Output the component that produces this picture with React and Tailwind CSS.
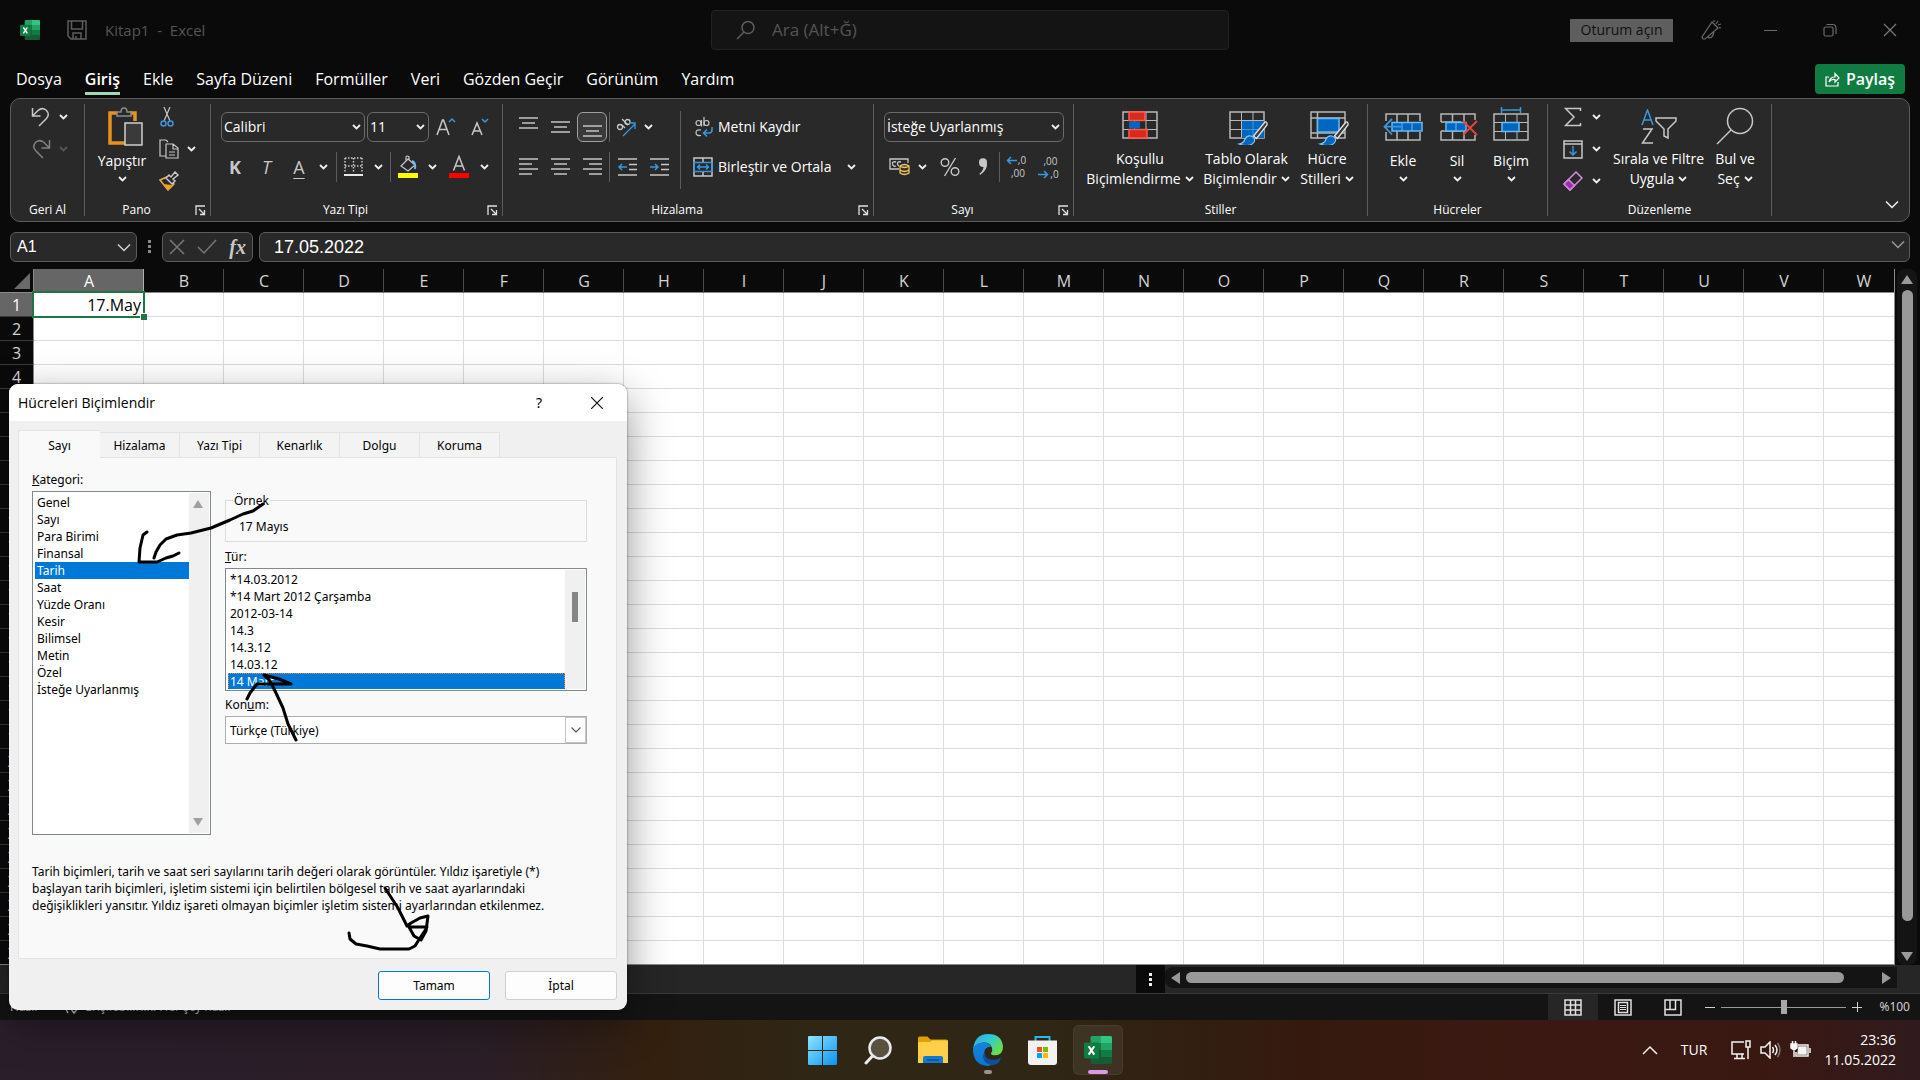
import { useState } from "react";
import clsx from "clsx";

const COLUMNS = "ABCDEFGHIJKLMNOPQRSTUVW".split("");
const ROWS = Array.from({ length: 28 }, (_, i) => i + 1);

const MENU = ["Dosya", "Giriş", "Ekle", "Sayfa Düzeni", "Formüller", "Veri", "Gözden Geçir", "Görünüm", "Yardım"];

const CATEGORIES = [
  "Genel", "Sayı", "Para Birimi", "Finansal", "Tarih", "Saat", "Yüzde Oranı",
  "Kesir", "Bilimsel", "Metin", "Özel", "İsteğe Uyarlanmış",
];

const TYPES = ["*14.03.2012", "*14 Mart 2012 Çarşamba", "2012-03-14", "14.3", "14.3.12", "14.03.12", "14 Mart"];

const DIALOG_TABS = ["Sayı", "Hizalama", "Yazı Tipi", "Kenarlık", "Dolgu", "Koruma"];

/* ---------- icons ---------- */

const Svg = ({ w, h, className, children, ...rest }) => (
  <svg width={w} height={h} viewBox={`0 0 ${w} ${h}`} fill="none" stroke="#c8c8c8" strokeWidth="1.5" className={clsx("shrink-0", className)} aria-hidden="true" {...rest}>
    {children}
  </svg>
);

const Chevron = ({ color = "#f0f0f0", className }) => (
  <Svg w={9} h={6} stroke={color} strokeWidth="1.8" className={className}>
    <path d="M1 1l3.5 3.5L8 1" />
  </Svg>
);

const ChevronWide = ({ color = "#d0d0d0", className }) => (
  <Svg w={14} h={9} stroke={color} className={className}>
    <path d="M1 1.5l6 6 6-6" />
  </Svg>
);

const ExcelLogo = ({ size }) => (
  <svg width={size} height={size} viewBox="0 0 30 30" className="shrink-0" aria-hidden="true">
    <path d="M8.500 0h10v8h-11.500v-6.500q0-1.500 1.500-1.500z" fill="#21a366" />
    <path d="M18 0h10.500q1.500 0 1.500 1.500v6h-12z" fill="#33c481" />
    <path d="M7 7.500h11v7.500h-11z" fill="#107c41" />
    <path d="M18 7.500h12v7.500h-12z" fill="#21a366" />
    <path d="M7 15h11v15h-9.500q-1.500 0-1.500-1.500z" fill="#185c37" />
    <path d="M18 15h12v7.500h-12z" fill="#107c41" />
    <path d="M18 22.500h12v6q0 1.500-1.500 1.500h-10.500z" fill="#185c37" />
    <rect x="0" y="7" width="16" height="17" rx="1.500" fill="#107c41" />
    <path d="M5 11l6 9M11 11l-6 9" stroke="#fff" strokeWidth="2.200" />
  </svg>
);

const Lines = ({ rows }) => (
  <Svg w={19} h={rows.length * 5} stroke="#c4c4c4">
    {rows.map(([x, len], i) => (
      <path key={i} d={`M${x} ${2 + i * 5}h${len}`} />
    ))}
  </Svg>
);

const GridBase = () => (
  <g stroke="#b8b8b8" strokeWidth="1.500">
    <path d="M1 1h34v26H1z" />
    <path d="M1 9.500h34M1 18.500h34M12.500 1v26M24 1v26" strokeWidth="1" />
  </g>
);

const Brush = () => (
  <g>
    <path d="M36 11l-11.500 14 3 2.500L38 14q.5-3.500-2-3z" fill="#3b3b3b" stroke="#e0e0e0" strokeWidth="1.300" />
    <path d="M10 33q5-1 6-5 2-4 6-3 5 2 3 6-4 6-15 2z" fill="#0067c0" stroke="#8cc4f0" strokeWidth="1.200" />
  </g>
);

const Launcher = () => (
  <Svg w={11} h={11} stroke="#e0e0e0" strokeWidth="1.300">
    <path d="M1 10V1h9M4 4l5 5M9.500 5v4.500H5" />
  </Svg>
);

/* ---------- ribbon pieces ---------- */

const Group = ({ label, className, inner, launcher, children }) => (
  <>
    <section aria-label={label} className={clsx("flex shrink-0 flex-col", className)}>
      <div className={clsx("flex flex-1", inner)}>{children}</div>
      <div className="mb-[3px] flex h-4 items-center text-xs leading-4">
        <span className="flex-1 text-center">{label}</span>
        {launcher && (
          <button type="button" aria-label={`${label} ayarları`} className="flex w-[22px] justify-end pr-1">
            <Launcher />
          </button>
        )}
      </div>
    </section>
    <span className="my-[5px] w-px shrink-0 bg-[#5c5c5c]" />
  </>
);

const Tool = ({ label, className, children }) => (
  <button type="button" aria-label={label} className={clsx("flex shrink-0 items-center justify-center", className)}>
    {children}
  </button>
);

const Drop = ({ className, color }) => (
  <Tool label="Diğer seçenekler" className={clsx("h-5", className)}>
    <Chevron color={color} />
  </Tool>
);

const Sep = ({ className }) => <span className={clsx("w-px shrink-0 bg-[#5c5c5c]", className)} />;

const Combo = ({ label, value, className }) => (
  <span className={clsx("relative flex shrink-0", className)}>
    <select aria-label={label} className="h-[30px] w-full appearance-none rounded-md border border-[#6a6a6a] bg-transparent px-[2px] text-sm text-white outline-none">
      <option>{value}</option>
    </select>
    <Chevron className="pointer-events-none absolute top-3 right-1" />
  </span>
);

const BigTool = ({ lines, below, className, children }) => (
  <button type="button" className={clsx("flex shrink-0 flex-col items-center text-sm leading-5", className)}>
    <span className={clsx("flex items-end justify-center pb-1", below ? "h-[52px]" : "h-[50px]")}>{children}</span>
    {lines.map((line, i) => (
      <span key={line} className="flex items-center gap-1 whitespace-nowrap">
        {line}
        {!below && i === lines.length - 1 && <Chevron />}
      </span>
    ))}
    {below && <Chevron className="mt-[5px]" />}
  </button>
);

const TitleBar = () => (
  <header className="flex h-[60px] shrink-0 items-center justify-between text-[#555]">
    <div className="flex flex-1 items-center pl-5">
      <ExcelLogo size={20} />
      <Tool label="Kaydet" className="ml-[27px]">
        <Svg w={20} h={20} stroke="#5e5e5e">
          <path d="M1 1h18v18H4l-3-3zM4.500 1v8h11V1M6 19v-6h8v6M9 16v3" />
        </Svg>
      </Tool>
      <span className="ml-[18px] text-[15px] whitespace-pre">Kitap1  -  Excel</span>
    </div>
    <label className="flex h-10 w-[518px] items-center gap-4 rounded border border-[#222] bg-[#141414] pl-6">
      <Svg w={20} h={20} stroke="#5e5e5e">
        <circle cx="12" cy="7.500" r="6" />
        <path d="M8 12l-7 7" />
      </Svg>
      <input aria-label="Ara" placeholder="Ara (Alt+Ğ)" className="flex-1 bg-transparent text-[17px] outline-none placeholder:text-[#555]" />
    </label>
    <div className="flex flex-1 items-center justify-end">
      <button type="button" className="h-[23px] w-[103px] bg-[#5e5e5e] text-sm text-[#111]">Oturum açın</button>
      <Tool label="Yenilikler" className="ml-7">
        <Svg w={22} h={22} stroke="#6a6a6a">
          <path d="M2 20l-1-2L11 3l6 6L4 20zM7 18q4 3 6-5M13 1v2M17 2l-2 3M20 5l-3 1M20 9l-2-.5" strokeWidth="1.200" />
        </Svg>
      </Tool>
      <Tool label="Simge durumuna küçült" className="ml-[17px] w-[60px]">
        <Svg w={13} h={13} stroke="#6a6a6a"><path d="M0 6.500h13" strokeWidth="1" /></Svg>
      </Tool>
      <Tool label="Geri yükle" className="w-[60px]">
        <Svg w={14} h={14} stroke="#6a6a6a" strokeWidth="1.200">
          <rect x="1" y="4" width="9" height="9" rx="1.500" />
          <path d="M3.500 1.500h6q3.500 0 3.500 3.500v6" />
        </Svg>
      </Tool>
      <Tool label="Kapat" className="w-[60px]">
        <Svg w={14} h={14} stroke="#7a7a7a" strokeWidth="1.200"><path d="M1 1l12 12M13 1L1 13" /></Svg>
      </Tool>
    </div>
  </header>
);

const MenuBar = () => (
  <nav className="flex h-[38px] shrink-0 items-center pr-[15px] pl-4">
    <ul className="flex gap-[23px] text-base">
      {MENU.map((item) => (
        <li key={item}>
          <button type="button" className={clsx("flex h-8 items-center border-b-[3px] pt-[2px] whitespace-nowrap", item === "Giriş" ? "border-[#9fd9b8] font-semibold" : "border-transparent")}>
            {item}
          </button>
        </li>
      ))}
    </ul>
    <button type="button" className="ml-auto flex h-[30px] w-[90px] items-center justify-center gap-1.5 rounded bg-[#107c41] text-base font-semibold">
      <Svg w={15} h={15} stroke="#fff" strokeWidth="1.200">
        <path d="M4 5H1v9h12v-4M4 10q1-5 6-5V1.500L14 6l-4 4V7.500Q6 7 4 10z" />
      </Svg>
      Paylaş
    </button>
  </nav>
);

const Ribbon = () => (
  <div className="mx-[10px] flex h-[124px] shrink-0 rounded-[10px] border border-[#5c5c5c] bg-[#292929]">
    <Group label="Geri Al" className="w-[73px]">
      <div className="flex flex-col gap-3 pt-2 pl-5">
        <div className="flex items-center gap-1">
          <Tool label="Geri al">
            <Svg w={20} h={20}><path d="M1.500 1v8h8M1.500 9L7 3.500q4-3.500 8-.5 4.500 4.500 0 9L8 19" /></Svg>
          </Tool>
          <Drop className="w-4" />
        </div>
        <div className="flex items-center gap-1">
          <Tool label="Yinele">
            <Svg w={20} h={20} stroke="#808080"><path d="M18.500 1v8h-8M18.500 9L13 3.500q-4-3.500-8-.5-4.500 4.500 0 9L12 19" /></Svg>
          </Tool>
          <Drop className="w-4" color="#555" />
        </div>
      </div>
    </Group>

    <Group label="Pano" className="w-[125px]" launcher>
      <BigTool lines={["Yapıştır"]} below className="w-[74px]">
        <Svg w={36} h={40} className="ml-2">
          <path d="M9 6H2v30h15M27 14V6h-6" stroke="#e8921c" strokeWidth="3.500" />
          <path d="M9 9V5h4q0-4 3-4t3 4h4v4z" fill="#292929" stroke="#8c8c8c" />
          <rect x="17" y="16" width="17" height="22" fill="#3a3a3a" stroke="#d0d0d0" />
        </Svg>
      </BigTool>
      <div className="flex flex-col gap-3 pt-2">
        <Tool label="Kes" className="h-5 w-4">
          <Svg w={14} h={20}>
            <path d="M4 0l6 14M10 0L4 14" strokeWidth="1.200" />
            <circle cx="3.500" cy="16.500" r="2.500" stroke="#3a96dd" />
            <circle cx="10.500" cy="16.500" r="2.500" stroke="#3a96dd" />
          </Svg>
        </Tool>
        <div className="flex">
          <Tool label="Kopyala" className="h-5 w-5">
            <Svg w={20} h={20}>
              <path d="M7 17H1V1h6l2 2M7 5h7l5 4v10H7zM14 5v5h5M10 13h6M10 16h6" strokeWidth="1.200" />
            </Svg>
          </Tool>
          <Drop className="ml-1 w-4" />
        </div>
        <Tool label="Biçim boyacısı" className="h-5 w-5">
          <Svg w={20} h={20}>
            <path d="M1 9l7-3 7 7-6 6z" fill="#292929" stroke="#e8b04c" />
            <path d="M4 13l9 1-4 5z" fill="#f0a020" stroke="none" />
            <path d="M7 7l3-3 2 2 4-5 3 3-5 4 2 2-3 3z" fill="#292929" />
          </Svg>
        </Tool>
      </div>
    </Group>

    <Group label="Yazı Tipi" className="w-[291px]" launcher>
      <div className="flex flex-col gap-[10px] pt-[13px] pl-[10px]">
        <div className="flex h-[30px] items-center">
          <Combo label="Yazı tipi" value="Calibri" className="w-[144px]" />
          <Combo label="Yazı tipi boyutu" value="11" className="ml-[2px] w-[62px]" />
          <Tool label="Büyüt" className="w-[34px]">
            <Svg w={20} h={20}><path d="M1 18L6.500 3h1L13 18M3 12.500h8" /><path d="M13 5l3-3 3 3" stroke="#3a96dd" /></Svg>
          </Tool>
          <Tool label="Küçült" className="w-[34px]">
            <Svg w={20} h={20}><path d="M2 18L7 6l5 12M4 14h6" /><path d="M12 2l3 3 3-3" stroke="#3a96dd" /></Svg>
          </Tool>
        </div>
        <div className="flex h-[30px] items-center text-lg leading-5 text-[#c8c8c8]">
          <button type="button" className="w-7 font-bold">K</button>
          <button type="button" className="w-[35px] italic">T</button>
          <button type="button" className="w-[30px] underline underline-offset-4">A</button>
          <Drop className="w-[18px]" />
          <Sep className="ml-1 h-[30px]" />
          <Tool label="Kenarlıklar" className="w-[33px]">
            <Svg w={19} h={20}>
              <path d="M1 1h17M1 9h17M1 1v15M9.500 1v15M18 1v15" strokeDasharray="1.500 1.500" />
              <path d="M0 18h19" stroke="#e8e8e8" strokeWidth="2" />
            </Svg>
          </Tool>
          <Drop className="w-4" />
          <Sep className="ml-1 h-[30px]" />
          <Tool label="Dolgu rengi" className="w-[33px]">
            <Svg w={20} h={24}>
              <path d="M10 4l7 6-7 6-7-5zM8 6V2q1-2 3 0v4" strokeWidth="1.200" />
              <path d="M14 6q4 1 3 8" stroke="#6cb8f0" strokeWidth="2" />
              <path d="M0 18h20v5H0z" fill="#ff0" stroke="none" />
            </Svg>
          </Tool>
          <Drop className="w-4" />
          <Tool label="Yazı tipi rengi" className="w-[38px]">
            <Svg w={20} h={24}>
              <path d="M4.500 15.500L10 1.500l5.500 14M6.500 11h7" />
              <path d="M0 18h20v5H0z" fill="#f00" stroke="none" />
            </Svg>
          </Tool>
          <Drop className="w-3" />
        </div>
      </div>
    </Group>

    <Group label="Hizalama" className="w-[370px]" launcher>
      <div className="flex w-[177px] flex-col gap-[10px] pt-[13px] pl-[9px]">
        <div className="flex h-[30px] items-center">
          <Tool label="Üste hizala" className="w-8 pb-2"><Lines rows={[[0, 19], [3, 13], [0, 19]]} /></Tool>
          <Tool label="Ortaya hizala" className="w-8"><Lines rows={[[0, 19], [3, 13], [0, 19]]} /></Tool>
          <Tool label="Alta hizala" className="mx-px h-[30px] w-[30px] rounded-md border border-[#a0a0a0] bg-[#3a3a3a] pt-2">
            <Lines rows={[[0, 19], [3, 13], [0, 19]]} />
          </Tool>
          <Sep className="ml-px h-[30px]" />
          <Tool label="Yönlendirme" className="w-8">
            <Svg w={20} h={20} strokeWidth="1.300">
              <circle cx="4" cy="10" r="2.500" />
              <path d="M6 8l3 3" />
              <path d="M6 2l6 6" />
              <circle cx="11.500" cy="5" r="2.500" />
              <path d="M7 19L19 7M13 6h6v6" stroke="#3a96dd" />
            </Svg>
          </Tool>
          <Drop className="w-3" />
        </div>
        <div className="flex h-[30px] items-center">
          <Tool label="Sola hizala" className="w-8"><Lines rows={[[0, 19], [0, 13], [0, 19], [0, 13]]} /></Tool>
          <Tool label="Ortala" className="w-8"><Lines rows={[[0, 19], [3, 13], [0, 19], [3, 13]]} /></Tool>
          <Tool label="Sağa hizala" className="w-8"><Lines rows={[[0, 19], [6, 13], [0, 19], [6, 13]]} /></Tool>
          <Sep className="ml-px h-[30px]" />
          <Tool label="Girintiyi azalt" className="w-[34px]">
            <Svg w={19} h={18}><path d="M0 1h19M11 6.500h8M11 11.500h8M0 17h19" /><path d="M9 9H1M4 6L1 9l3 3" stroke="#3a96dd" /></Svg>
          </Tool>
          <Tool label="Girintiyi artır" className="w-[30px]">
            <Svg w={19} h={18}><path d="M0 1h19M11 6.500h8M11 11.500h8M0 17h19" /><path d="M0 9h8M5 6l3 3-3 3" stroke="#3a96dd" /></Svg>
          </Tool>
        </div>
      </div>
      <Sep className="mt-3 h-[78px]" />
      <div className="flex flex-col gap-[10px] pt-[13px] pl-[11px] text-sm">
        <button type="button" className="flex h-[30px] items-center gap-1">
          <Svg w={22} h={20} strokeWidth="1.200">
            <circle cx="6.500" cy="6" r="2.500" /><path d="M9.500 3v6.500M12 0v9" /><circle cx="14.500" cy="6" r="2.500" />
            <path d="M9 13q-5-1-5 3 0 3 5 2.500" />
            <path d="M20 10v3q0 3-3 3h-5M15 12.500L11.500 16l3.500 3.500" stroke="#3a96dd" strokeWidth="1.500" />
          </Svg>
          Metni Kaydır
        </button>
        <div className="flex h-[30px] items-center">
          <button type="button" className="flex items-center gap-1">
            <Svg w={22} h={20}>
              <path d="M2 1h18v18H2zM11 1v4M11 15v4" />
              <path d="M2 5.500h18v9H2zM5 10h12M8 7.500L5.500 10 8 12.500M14 7.500l2.500 2.500-2.500 2.500" stroke="#3a96dd" />
            </Svg>
            Birleştir ve Ortala
          </button>
          <Drop className="ml-3 w-4" />
        </div>
      </div>
    </Group>

    <Group label="Sayı" className="w-[199px]" launcher>
      <div className="flex flex-col gap-[10px] pt-[13px] pl-[10px]">
        <Combo label="Sayı biçimi" value="İsteğe Uyarlanmış" className="w-[180px]" />
        <div className="flex h-[30px] items-center text-[#c8c8c8]">
          <Tool label="Finansal sayı biçimi" className="w-[30px]">
            <Svg w={21} h={18}>
              <path d="M10 11H1V1h18v4M7 4Q3 3 3.500 6 4 9 7 8M12 4Q8 3 8.500 6 9 8 10 8" strokeWidth="1.300" />
              <path d="M11 8v7q4.500 3 9 0V8q-4.500-3-9 0q4.500 3 9 0M11 12q4.500 3 9 0" fill="#3a3020" stroke="#f0c860" strokeWidth="1.300" />
            </Svg>
          </Tool>
          <Drop className="w-4" />
          <Tool label="Yüzde" className="w-10">
            <Svg w={20} h={20} strokeWidth="1.400">
              <circle cx="5" cy="5.500" r="3.800" /><circle cx="15" cy="14.500" r="3.800" /><path d="M15.500 1L4.500 19" />
            </Svg>
          </Tool>
          <Tool label="Virgül" className="w-[25px]">
            <Svg w={10} h={18} stroke="none"><path d="M1 4.500a4 4 0 018-.5q1 8-7 13l-.5-1.500Q5 13 5.500 9 1 9 1 4.500z" fill="#c8c8c8" /></Svg>
          </Tool>
          <Sep className="ml-1 h-[30px]" />
          <Tool label="Ondalık artır" className="w-8 flex-col text-[10px] leading-[14px]">
            <span className="flex h-3 items-center gap-px">
              <Svg w={11} h={9} stroke="#3a96dd"><path d="M11 4.500H1.500M5 1L1.500 4.500 5 8" /></Svg>,0
            </span>
            <span className="pl-1">,00</span>
          </Tool>
          <Tool label="Ondalık azalt" className="w-[33px] flex-col text-[10px] leading-[14px]">
            <span className="pl-1">,00</span>
            <span className="flex h-3 items-center gap-px">
              <Svg w={11} h={9} stroke="#3a96dd"><path d="M0 4.500h9.500M6 1l3.500 3.500L6 8" /></Svg>,0
            </span>
          </Tool>
        </div>
      </div>
    </Group>

    <Group label="Stiller" className="w-[293px]" inner="pl-2">
      <BigTool lines={["Koşullu", "Biçimlendirme"]} className="w-[116px]">
        <Svg w={36} h={34}>
          <GridBase />
          <path d="M7 1h16v8.500H7zM7 18.500h18V27H7z" fill="#d92a1c" stroke="#ff5a4c" />
          <path d="M7 10.500h11v7H7z" fill="#0067c0" stroke="none" />
        </Svg>
      </BigTool>
      <BigTool lines={["Tablo Olarak", "Biçimlendir"]} className="w-[97px]">
        <Svg w={39} h={34} className="ml-1">
          <GridBase />
          <path d="M13 10h22v17H13z" fill="#0067c0" stroke="none" />
          <path d="M13 18.500h22M24 10v17" stroke="#3a96dd" strokeWidth="1" />
          <Brush />
        </Svg>
      </BigTool>
      <BigTool lines={["Hücre", "Stilleri"]} className="w-16">
        <Svg w={39} h={34} className="ml-1">
          <path d="M1 1h34v26H1zM7.500 1v26M1 7h34M1 22h34" stroke="#b8b8b8" />
          <path d="M7.500 7.500H29V21H7.500z" fill="#0067c0" stroke="#6cb8f0" />
          <Brush />
        </Svg>
      </BigTool>
    </Group>

    <Group label="Hücreler" className="w-[179px]" inner="pl-2">
      <BigTool lines={["Ekle"]} below className="w-[54px]">
        <Svg w={40} h={34}>
          <g stroke="#b8b8b8"><path d="M3 8V1h34v7M3 19v8h34v-8M14 1v8M25 1v8M14 18v9M25 18v9" /></g>
          <path d="M9 9.500h30v8.500H9z" fill="#0067c0" stroke="#6cb8f0" />
          <path d="M19 9.500V18M29 9.500V18" stroke="#6cb8f0" strokeWidth="1" />
          <path d="M18 13.700H2M9 6l-7.500 7.700L9 21.500" stroke="#3a96dd" strokeWidth="1.800" />
        </Svg>
      </BigTool>
      <BigTool lines={["Sil"]} below className="w-[54px]">
        <Svg w={38} h={34} className="ml-1">
          <g stroke="#b8b8b8"><path d="M1 9V1h34v6M1 18v9h34v-5M12.500 1v8M24 1v8M12.500 18v9M24 18v9M1 9h20M1 18h20" /></g>
          <path d="M6 9.500h20v8.500H6z" fill="#0067c0" stroke="#6cb8f0" />
          <path d="M16 9.500V18" stroke="#6cb8f0" strokeWidth="1" />
          <path d="M23 8l14 14M37 8L23 22" stroke="#e8453a" strokeWidth="1.800" />
        </Svg>
      </BigTool>
      <BigTool lines={["Biçim"]} below className="w-[54px]">
        <Svg w={36} h={40}>
          <path d="M8 3h20M8.500 0v6M27.500 0v6" stroke="#3a96dd" />
          <g transform="translate(0 6)">
            <GridBase />
            <path d="M9 9.500h17v9H9z" fill="#0067c0" stroke="#6cb8f0" />
          </g>
        </Svg>
      </BigTool>
    </Group>

    <Group label="Düzenleme" className="w-[223px]">
      <div className="flex flex-col gap-3 pt-2 pl-3">
        <div className="flex">
          <Tool label="Otomatik toplam" className="h-5 w-[26px]">
            <Svg w={18} h={20}><path d="M16.500 4V1.500h-15L10 10l-8.500 8.500h15V16" /></Svg>
          </Tool>
          <Drop className="w-5" />
        </div>
        <div className="flex">
          <Tool label="Dolgu" className="h-5 w-[26px]">
            <Svg w={20} h={19}><path d="M1 1h18v17H1zM1 4h18" /><path d="M10 6v9M6.500 11.500L10 15l3.500-3.500" stroke="#3a96dd" /></Svg>
          </Tool>
          <Drop className="w-5" />
        </div>
        <div className="flex">
          <Tool label="Temizle" className="h-5 w-[26px]">
            <Svg w={20} h={20} stroke="#d58ae0">
              <path d="M1 13L13 1l6 6L7 19z" />
              <path d="M1 13l4.500-4.500 6 6L7 19z" fill="#9a2fa8" />
            </Svg>
          </Tool>
          <Drop className="w-5" />
        </div>
      </div>
      <BigTool lines={["Sırala ve Filtre", "Uygula"]} className="w-[105px]">
        <Svg w={38} h={36}>
          <path d="M2 16L7.500 1 13 16M4 11h7" stroke="#3a96dd" />
          <path d="M3 20h9L2.500 34H13" />
          <path d="M16 9h20v3l-8 8v9l-4-2v-7l-8-8z" />
        </Svg>
      </BigTool>
      <BigTool lines={["Bul ve", "Seç"]} className="w-12">
        <Svg w={38} h={38}><circle cx="24" cy="14" r="12.500" /><path d="M15 23L1 37" /></Svg>
      </BigTool>
    </Group>

    <div className="flex flex-1 items-end justify-end pr-[10px] pb-3">
      <Tool label="Şeridi daralt"><ChevronWide color="#f0f0f0" /></Tool>
    </div>
  </div>
);

const FormulaBar = () => (
  <div className="mx-[10px] mt-[10px] mb-[7px] flex h-[30px] shrink-0">
    <div className="relative w-[127px]">
      <input aria-label="Ad kutusu" defaultValue="A1" className="h-full w-full rounded-md border border-[#5c5c5c] bg-[#292929] px-1.5 font-['Liberation_Sans',sans-serif] text-base outline-none" />
      <ChevronWide className="pointer-events-none absolute top-[11px] right-1.5" />
    </div>
    <div className="flex w-[25px] items-center justify-center">
      <Svg w={3} h={14} stroke="none"><path d="M0 0h3v3H0zM0 5h3v3H0zM0 10h3v3H0z" fill="#8a8a8a" /></Svg>
    </div>
    <div className="flex w-[91px] items-center justify-around rounded-md border border-[#5c5c5c] bg-[#292929]">
      <Tool label="İptal et"><Svg w={16} h={16} stroke="#777"><path d="M1 1l14 14M15 1L1 15" /></Svg></Tool>
      <Tool label="Gir"><Svg w={20} h={16} stroke="#777"><path d="M1 8l6 6L19 1" /></Svg></Tool>
      <button type="button" className="font-['Liberation_Serif',serif] text-xl leading-6 font-bold text-[#c8c8c8] italic">fx</button>
    </div>
    <div className="relative ml-1.5 flex-1">
      <input aria-label="Formül çubuğu" defaultValue="17.05.2022" className="h-full w-full rounded-md border border-[#5c5c5c] bg-[#292929] px-3.5 font-['Liberation_Sans',sans-serif] text-lg outline-none" />
      <ChevronWide color="#999" className="pointer-events-none absolute top-2 right-[5px]" />
    </div>
  </div>
);

const Sheet = () => (
  <div className="flex min-h-0 flex-1">
    <div className="min-w-0 flex-1 overflow-hidden border-r border-b border-[#8a8a8a] bg-white">
      <table className="w-[1904px] table-fixed border-separate border-spacing-0 text-base leading-5">
        <thead>
          <tr className="h-6 bg-[#0a0a0a]">
            <th className="w-[34px] border-r border-b border-[#8a8a8a] p-0">
              <Svg w={16} h={16} stroke="none" className="ml-[14px]"><path d="M16 0v16H0z" fill="#6a6a6a" /></Svg>
            </th>
            {COLUMNS.map((col) => (
              <th
                key={col}
                className={clsx("border-r border-b border-b-[#8a8a8a] p-0 pt-px pl-px font-normal", col === "A" ? "w-[110px] border-r-[#b0b0b0] bg-[#666] text-white" : "w-20 border-r-[#4a4a4a] text-[#d4d4d4]")}
              >
                {col}
              </th>
            ))}
          </tr>
        </thead>
        <tbody>
          {ROWS.map((row) => (
            <tr key={row} className="h-6">
              <th className={clsx("border-r border-b border-r-[#8a8a8a] border-b-[#3a3a3a] p-0 pt-px font-normal", row === 1 ? "bg-[#666] text-white" : "bg-[#0a0a0a] text-[#d4d4d4]")}>
                {row}
              </th>
              {COLUMNS.map((col) =>
                row === 1 && col === "A" ? (
                  <td key={col} className="relative border-r border-b border-[#dcdcdc] p-0 pt-px pr-[2px] text-right text-black">
                    17.May
                    <span className="absolute -top-[2px] -right-[2px] -bottom-[2px] -left-[2px] border-2 border-[#217346]" />
                    <span className="absolute -right-1 -bottom-1 size-[7px] border-t border-l border-white bg-[#217346]" />
                  </td>
                ) : (
                  <td key={col} className="border-r border-b border-[#dcdcdc] p-0" />
                )
              )}
            </tr>
          ))}
        </tbody>
      </table>
    </div>
    <div className="mr-[3px] ml-[2px] flex w-5 flex-col items-center rounded-lg bg-[#141414] pt-1.5 pb-1">
      <Svg w={12} h={10} stroke="none"><path d="M6 0l6 9H0z" fill="#999" /></Svg>
      <span className="mt-[5px] mb-[30px] w-[11px] flex-1 rounded-full bg-[#999]" />
      <Svg w={12} h={10} stroke="none"><path d="M6 10l6-9H0z" fill="#999" /></Svg>
    </div>
  </div>
);

const SheetTabs = () => (
  <div className="flex h-[29px] shrink-0 border-b border-[#3a3a3a] bg-[#262626]">
    <div className="ml-auto flex w-[29px] items-center justify-center bg-[#0a0a0a]">
      <Svg w={3} h={13} stroke="none"><path d="M0 0h3v3H0zM0 5h3v3H0zM0 10h3v3H0z" fill="#f0f0f0" /></Svg>
    </div>
    <div className="mt-[2px] mr-[23px] flex h-[21px] w-[732px] items-center rounded-l-lg bg-[#141414] px-1.5">
      <Svg w={9} h={12} stroke="none"><path d="M0 6l9-6v12z" fill="#999" /></Svg>
      <span className="mr-[38px] ml-1.5 h-[11px] flex-1 rounded-full bg-[#999]" />
      <Svg w={9} h={12} stroke="none"><path d="M9 6L0 0v12z" fill="#999" /></Svg>
    </div>
  </div>
);

const StatusBar = () => (
  <footer className="flex h-[26px] shrink-0 items-center bg-[#141414] px-[10px] font-['Noto_Sans',sans-serif] text-xs text-[#d0d0d0]">
    <span>Hazır</span>
    <button type="button" className="ml-6 flex items-center gap-1">
      <Svg w={18} h={16} stroke="#d0d0d0"><path d="M4 2q-3 6 1 12M8 10l3 4 6-7" /></Svg>
      Erişilebilirlik: Her şey hazır
    </button>
    <div className="ml-auto flex h-full items-center">
      <Tool label="Normal" className="h-full w-[50px] bg-[#262626]">
        <Svg w={18} h={17} stroke="#e0e0e0"><path d="M1 1h16v15H1zM1 6h16M1 11h16M6.500 1v15M11.500 1v15" /></Svg>
      </Tool>
      <Tool label="Sayfa düzeni" className="w-[50px]">
        <Svg w={18} h={17} stroke="#e0e0e0"><path d="M1 1h16v15H1zM4.500 3.500h9v10h-9z" /><path d="M6 6.500h6M6 8.500h6M6 10.500h6" strokeWidth="1" /></Svg>
      </Tool>
      <Tool label="Sayfa sonu önizleme" className="w-[50px]">
        <Svg w={18} h={17} stroke="#e0e0e0"><path d="M1 1h16v15H1zM1 10.500h10.500V1M6 1v9.500" /></Svg>
      </Tool>
      <Tool label="Uzaklaştır" className="ml-[7px]">
        <Svg w={10} h={10} stroke="#d0d0d0" strokeWidth="1"><path d="M0 5.500h10" /></Svg>
      </Tool>
      <input
        type="range"
        aria-label="Yakınlaştırma"
        min="0"
        max="200"
        defaultValue="100"
        className="mx-1.5 h-[14px] w-[125px] appearance-none bg-transparent bg-[linear-gradient(#999,#999)] bg-[length:100%_1px] bg-center bg-no-repeat [&::-webkit-slider-thumb]:h-[14px] [&::-webkit-slider-thumb]:w-[6px] [&::-webkit-slider-thumb]:appearance-none [&::-webkit-slider-thumb]:bg-[#a8a8a8]"
      />
      <Tool label="Yakınlaştır">
        <Svg w={10} h={10} stroke="#d0d0d0" strokeWidth="1"><path d="M0 5.500h10M5.500 0v10" /></Svg>
      </Tool>
      <span className="ml-4 w-8 text-right whitespace-nowrap">%100</span>
    </div>
  </footer>
);

const Taskbar = () => (
  <div className="relative flex h-[60px] shrink-0 items-center justify-center bg-[linear-gradient(90deg,#2a1e2b_0%,#2b1e28_25%,#33200f_34%,#2f2615_42%,#2f2615_55%,#35190f_68%,#3b1912_80%,#3a1812_92%,#301a1e_100%)]">
    <div className="flex items-center pr-[2px]">
      <Tool label="Başlat" className="h-[50px] w-[55px]">
        <Svg w={29} h={29} stroke="none">
          <defs>
            <linearGradient id="win" x1="0" y1="0" x2="1" y2="1"><stop stopColor="#8fe4ff" /><stop offset="1" stopColor="#0a93f0" /></linearGradient>
          </defs>
          <path d="M0 1q0-1 1-1h13v14H0zM15 0h13q1 0 1 1v13H15zM0 15h14v14H1q-1 0-1-1zM15 15h14v13q0 1-1 1H15z" fill="url(#win)" />
        </Svg>
      </Tool>
      <Tool label="Ara" className="h-[50px] w-[55px]">
        <Svg w={28} h={29} stroke="#e8eaee">
          <circle cx="16" cy="12" r="10.500" fill="#5a5140" strokeWidth="2.500" />
          <path d="M8.500 20L2 27" strokeWidth="3" strokeLinecap="round" />
        </Svg>
      </Tool>
      <Tool label="Dosya Gezgini" className="h-[50px] w-[55px]">
        <Svg w={30} h={28} stroke="none">
          <path d="M0 2q0-1.500 1.500-1.500h8l3 3H28q2 0 2 2V10H0z" fill="#e0a000" />
          <path d="M0 6h12l2-1.500h16V27H0z" fill="#ffcf4a" />
          <path d="M5 27v-5q0-2 2-2h16q2 0 2 2v5z" fill="#0f7ad0" />
          <path d="M9 24h12" stroke="#0a4f90" strokeWidth="1.500" />
        </Svg>
      </Tool>
      <Tool label="Edge" className="relative h-[50px] w-[55px]">
        <Svg w={30} h={32} stroke="none" viewBox="0 0 30 30" preserveAspectRatio="none">
          <defs>
            <linearGradient id="edgeTop" x1="0" y1="0" x2="1" y2=".6"><stop stopColor="#2fa8e8" /><stop offset=".5" stopColor="#30c8d8" /><stop offset="1" stopColor="#68e048" /></linearGradient>
            <linearGradient id="edgeMid" x1="0" y1="0" x2="0" y2="1"><stop stopColor="#1683d8" /><stop offset="1" stopColor="#0a78d4" /></linearGradient>
          </defs>
          <path d="M0 14Q2 0 15 0q14 0 15 12 0 8-8 8-4 0-4-2 2-2 1-5-2-5-8-5Q4 8 0 14z" fill="url(#edgeTop)" />
          <path d="M0 14q3-6 10-6 6 0 8 4-7 0-7 7 0 8 9 9-2 2-5 2Q0 29 0 14z" fill="url(#edgeMid)" />
          <path d="M12 17q-1 6 6 7 6 1 10-2-2 8-10 7-8-2-8-8 0-3 2-4z" fill="#0c4f9c" />
        </Svg>
        <span className="absolute bottom-[1px] h-1 w-2 rounded-full bg-[#9a958a]" />
      </Tool>
      <Tool label="Store" className="h-[50px] w-[55px]">
        <Svg w={29} h={29} stroke="none">
          <path d="M7.500 7V1h14v6" stroke="#28b8f0" strokeWidth="2" />
          <path d="M0 4.500h29V26q0 3-3 3H3q-3 0-3-3z" fill="#f2f2f2" />
          <path d="M9 11h5v5H9z" fill="#f25022" /><path d="M15 11h5v5h-5z" fill="#7fba00" />
          <path d="M9 17h5v5H9z" fill="#00a4ef" /><path d="M15 17h5v5h-5z" fill="#ffb900" />
        </Svg>
      </Tool>
      <Tool label="Excel" className="relative ml-[3px] h-[50px] w-[50px] rounded-md border border-white/5 bg-white/7">
        <ExcelLogo size={28} />
        <span className="absolute bottom-0 h-1 w-5 rounded-full bg-[#d89ae0]" />
      </Tool>
    </div>
    <div className="absolute right-6 flex items-center text-sm leading-5">
      <Tool label="Gizli simgeler"><Svg w={16} h={10} stroke="#f0f0f0"><path d="M1 9l7-7 7 7" /></Svg></Tool>
      <button type="button" className="ml-5 w-8 text-sm">TUR</button>
      <Tool label="Ağ, ses ve pil" className="ml-5 gap-2">
        <Svg w={22} h={20} stroke="#f4f4f4">
          <path d="M14 2H2v12h12M4 18.500h11M7 14v4M12 14v4" />
          <path d="M16 1h4v6h-4zM18 7v12" />
        </Svg>
        <Svg w={22} h={18} stroke="#f4f4f4">
          <path d="M1 6h4l5-5v16l-5-5H1zM12.500 6q2 3 0 6M15 4q4 5 0 10" />
          <path d="M17.500 2q5 7 0 14" stroke="#80706c" />
        </Svg>
        <Svg w={22} h={18} stroke="#f4f4f4">
          <path d="M8 4h10v11H6v-4M20 7v5" />
          <path d="M9 6h7v7H8z" fill="#f4f4f4" />
          <path d="M1 3h6v4q-3 3-6 0zM2.500 0v3M5.500 0v3M4 8v8" fill="#f4f4f4" />
        </Svg>
      </Tool>
      <div className="ml-3 w-[72px] text-right">
        <div>23:36</div>
        <div>11.05.2022</div>
      </div>
    </div>
  </div>
);

/* ---------- format cells dialog ---------- */

const OptionList = ({ id, items, value, onPick, dotted }) => (
  <ul role="listbox" aria-labelledby={id} className="flex-1 overflow-hidden py-px pl-px leading-[17px]">
    {items.map((item) => (
      <li
        key={item}
        role="option"
        aria-selected={item === value}
        onClick={() => onPick(item)}
        className={clsx("px-[2px] whitespace-nowrap", item === value && "bg-[#0078d7] text-white", item === value && dotted && "outline-1 -outline-offset-1 outline-[#e08a3c] outline-dotted")}
      >
        {item}
      </li>
    ))}
  </ul>
);

const FormatDialog = () => {
  const [tab, setTab] = useState("Sayı");
  const [category, setCategory] = useState("Tarih");
  const [type, setType] = useState("14 Mart");

  return (
    <div role="dialog" aria-label="Hücreleri Biçimlendir" className="absolute top-[384px] left-[9px] w-[618px] overflow-hidden rounded-[9px] bg-[#f0f0f0] font-['Noto_Sans',sans-serif] text-xs text-black shadow-[0_14px_44px_rgba(0,0,0,0.42),0_0_2px_rgba(0,0,0,0.6)]">
      <div className="flex h-[37px] items-center bg-white pr-px pl-[9px] text-sm">
        <h1 className="flex-1 font-['Open_Sans',sans-serif]">Hücreleri Biçimlendir</h1>
        <button type="button" aria-label="Yardım" className="w-[58px]">?</button>
        <Tool label="Kapat" className="w-[58px]">
          <Svg w={12} h={12} stroke="#111" strokeWidth="1.200"><path d="M0 0l12 12M12 0L0 12" /></Svg>
        </Tool>
      </div>

      <div className="pt-[9px] pr-[10px] pb-[10px] pl-[9px]">
        <div role="tablist" className="flex items-end">
          {DIALOG_TABS.map((name) => (
            <button
              key={name}
              type="button"
              role="tab"
              aria-selected={tab === name}
              onClick={() => setTab(name)}
              className={clsx("border-[#e3e3e3] pt-[2px]", tab === name ? "z-10 -mb-px h-7 w-[82px] border-t border-l bg-[#f9f9f9]" : "h-[25px] w-20 border-t border-r bg-[#f3f3f3]")}
            >
              {name}
            </button>
          ))}
        </div>

        <div className="h-[502px] border border-[#e3e3e3] bg-[#f9f9f9] pt-[13px] pl-[13px]">
          <div className="flex gap-[14px]">
            <div className="w-[179px]">
              <div id="kategori" className="leading-[17px]"><u>K</u>ategori:</div>
              <div className="mt-[3px] flex h-[344px] border border-[#828790] bg-white p-px">
                <OptionList id="kategori" items={CATEGORIES} value={category} onPick={setCategory} />
                <div className="flex w-5 flex-col items-center justify-between bg-[#f0f0f0] py-[7px] pr-[2px]">
                  <Svg w={10} h={8} stroke="none"><path d="M5 0l5 8H0z" fill="#a0a0a0" /></Svg>
                  <Svg w={10} h={8} stroke="none"><path d="M5 8l5-8H0z" fill="#a0a0a0" /></Svg>
                </div>
              </div>
            </div>

            <div className="w-[362px] pt-[21px] leading-[17px]">
              <fieldset className="h-[50px] border border-[#dcdcdc] pl-[13px]">
                <legend className="-ml-1.5 px-px">Örnek</legend>
                <div className="pt-[9px]">17 Mayıs</div>
              </fieldset>
              <div id="tur" className="mt-[6px]"><u>T</u>ür:</div>
              <div className="mt-[3px] flex h-[123px] border border-[#828790] bg-white p-px">
                <OptionList id="tur" items={TYPES} value={type} onPick={setType} dotted />
                <div className="w-5 bg-[#f0f0f0] pt-[22px] pr-[7px] pl-[7px]">
                  <div className="h-[30px] bg-[#868686]" />
                </div>
              </div>
              <label htmlFor="konum" className="mt-[5px] block">Kon<u>u</u>m:</label>
              <div className="relative mt-[3px]">
                <select id="konum" className="h-7 w-full appearance-none border border-[#adadad] bg-white px-1 outline-none">
                  <option>Türkçe (Türkiye)</option>
                </select>
                <span className="pointer-events-none absolute top-px right-px flex h-[26px] w-[21px] items-center justify-center border border-[#c4c4c4] bg-[#fdfdfd]">
                  <Svg w={10} h={6} stroke="#555" strokeWidth="1.200"><path d="M.5.5L5 5 9.500.5" /></Svg>
                </span>
              </div>
            </div>
          </div>
          <p className="mt-7 leading-[17px] whitespace-nowrap">
            Tarih biçimleri, tarih ve saat seri sayılarını tarih değeri olarak görüntüler. Yıldız işaretiyle (*)<br />
            başlayan tarih biçimleri, işletim sistemi için belirtilen bölgesel tarih ve saat ayarlarındaki<br />
            değişiklikleri yansıtır. Yıldız işareti olmayan biçimler işletim sistemi ayarlarından etkilenmez.
          </p>
        </div>

        <div className="mt-3 flex justify-end gap-[15px]">
          <button type="button" className="h-[29px] w-28 rounded-[3px] border border-[#0078d4] bg-[#fdfdfd]">Tamam</button>
          <button type="button" className="h-[29px] w-28 rounded-[3px] border border-[#d0d0d0] bg-[#fdfdfd]">İptal</button>
        </div>
      </div>
    </div>
  );
};

/* freehand arrows drawn over the dialog */
const Scribbles = () => (
  <svg width="640" height="1080" viewBox="0 0 640 1080" fill="none" stroke="#000" strokeWidth="3" strokeLinecap="round" strokeLinejoin="round" className="pointer-events-none absolute top-0 left-0" aria-hidden="true">
    <path d="M263 504l-10 7-10 3-13 6-19 8-20 5-14 2-11 4-6 6-4 7-2 6" />
    <path d="M147 532l-4 3-3 13-1 14h18l9-4 7-2 6-3" />
    <path d="M247 699l3-6 7-9h34l-12-5-15-4 6 6 6 12 7 15 5 16 8 16" />
    <path d="M385 888l13 20 9 18 4-3 9-5 8-2-2 15-5 9-7-4-5-9h18" />
    <path d="M349 933l1 6 6 5 11 2 13 3h29l6-3 5-8 6-9" />
  </svg>
);

export default function App() {
  return (
    <div className="relative flex h-screen flex-col overflow-hidden bg-[#0a0a0a] font-['Open_Sans','Noto_Sans',sans-serif] text-white">
      <TitleBar />
      <MenuBar />
      <Ribbon />
      <FormulaBar />
      <Sheet />
      <SheetTabs />
      <StatusBar />
      <Taskbar />
      <FormatDialog />
      <Scribbles />
    </div>
  );
}
